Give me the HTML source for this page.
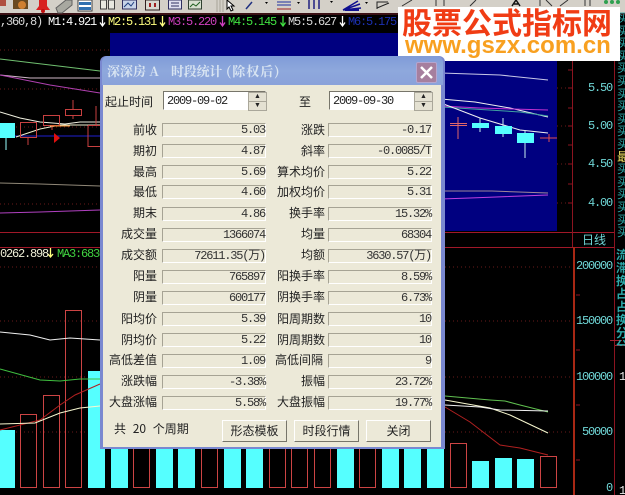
<!DOCTYPE html>
<html><head><meta charset="utf-8"><style>
html,body{margin:0;padding:0;background:#000;width:625px;height:495px;overflow:hidden}
#p{position:relative;width:625px;height:495px;overflow:hidden;background:#000;font-family:"Liberation Sans","Noto Sans CJK SC",sans-serif}
svg{position:absolute;left:0;top:0}
.m{position:absolute;font:12px/14px "Liberation Mono","Noto Sans CJK SC",monospace;letter-spacing:-1.2px;white-space:pre}
.a{position:absolute;font:12px/14px "Liberation Mono",monospace;letter-spacing:-1.2px;color:#6fd6d6;text-align:right;width:50px}
#d{position:absolute;left:100px;top:56px;width:345px;height:393px;background:#7a88d0;border-radius:6px 6px 0 0}
#t{position:absolute;left:2px;top:0;width:341px;height:29px;background:linear-gradient(#7f9bd8,#8ea8dc 50%,#8aa2da);border-radius:6px 6px 0 0}
#t b{position:absolute;top:7px;font:bold 13px/16px "Noto Serif CJK SC","Noto Sans CJK SC",serif;color:#d8e4f2;white-space:pre}
#x{position:absolute;left:314px;top:6px;width:19px;height:19px;background:#a67f9e;border:1px solid #b5a5cf;border-radius:2px}
#b{position:absolute;left:3px;top:29px;width:338px;height:362px;background:#ece9d8}
.l,.f,.i,.s,.g,.o{position:absolute}
.l{font:12px/14px "Noto Sans CJK SC",sans-serif;color:#222;text-align:right;width:60px;white-space:nowrap}
.f{width:102px;height:12px;background:#ece9d8;border:1px solid;border-color:#a6a394 #fff #fff #a6a394;font:12px/13px "Liberation Mono","Noto Sans CJK SC",monospace;letter-spacing:-1.2px;color:#333;text-align:right;white-space:pre}
.i{top:91px;width:101px;height:17px;background:#fff;border:1px solid;border-color:#77756a #fff #fff #77756a;font:12px/18px "Liberation Mono",monospace;letter-spacing:-1.2px;color:#222;text-indent:3px}
.s{width:17px;height:8px;background:#e4e1d2;border:1px solid #aaa79a;font:7px/8px "Liberation Sans",sans-serif;text-align:center;color:#222;box-sizing:content-box}
.o{top:420px;width:63px;height:20px;background:#ece9d8;border:1px solid;border-color:#fff #77756a #77756a #fff;font:12px/20px "Noto Sans CJK SC",sans-serif;color:#222;text-align:center}
</style></head><body><div id="p">
<svg width="625" height="495" viewBox="0 0 625 495" fill="none">
<rect x="0" y="0" width="625" height="13" fill="#d4d0c8"/>
<rect x="0" y="13" width="625" height="2" fill="#3a1014"/>
<rect x="110" y="33" width="447" height="198" fill="#000080"/>
<!-- toolbar icons -->
<rect x="0" y="0" width="6" height="6" fill="#b05040"/>
<rect x="13" y="0" width="15" height="9" fill="#6a4a20"/><circle cx="22" cy="5" r="4" fill="#d08030"/>
<path d="M36 10h14l-3-4V0h-8v6z" fill="#d82020"/><circle cx="43" cy="11" r="2" fill="#c01010"/>
<path d="M56 8L66 0h6v5L62 13h-4z" fill="#a8a8a0" stroke="#606060"/>
<rect x="78" y="0" width="14" height="11" fill="#fff" stroke="#404040"/><rect x="79" y="2" width="12" height="3" fill="#3070b0"/><rect x="79" y="7" width="12" height="3" fill="#3070b0"/>
<rect x="100.500" y="0" width="6" height="9" fill="#e8e8e0" stroke="#404040"/><rect x="108.500" y="0" width="6" height="9" fill="#e8e8e0" stroke="#404040"/>
<rect x="122.500" y="0" width="14" height="9" fill="#c8d4e8" stroke="#303060"/><path d="M124 7l4-4 3 3 3-4" stroke="#204080"/>
<rect x="145.500" y="0" width="14" height="10" fill="#d8d8d0" stroke="#302020"/><path d="M149 3h2v4h-2zM154 3h2v4h-2z" fill="#a02020"/>
<rect x="168.500" y="0" width="13" height="9" fill="#e0e0f0" stroke="#303060"/><path d="M171 3h8M171 6h8" stroke="#303060"/>
<rect x="188.500" y="0" width="13" height="9" fill="#d8e0d0" stroke="#304030"/><path d="M190 7l3-3 3 2 4-4" stroke="#206020"/>
<path d="M217 0v12M220 0v12M223 0v12" stroke="#a8a498"/>
<path d="M227 0v9l2-2 2 4 2-1-2-4h3z" fill="#fff" stroke="#000"/>
<path d="M246 9l6-7" stroke="#203080" stroke-width="1.500"/><path d="M265 2h3l-1.500 2z" fill="#000"/>
<path d="M277 2h14M277 5h14" stroke="#2030a0"/><path d="M277 9h14" stroke="#a02020"/><path d="M297 2h3l-1.500 2z" fill="#000"/>
<path d="M309 0v9M314 0v9M319 0v9" stroke="#202080" stroke-width="1.500"/><path d="M330 1h3l-1.500 2z" fill="#000"/>
<path d="M343 10L358 1M343 10L360 4M343 10L361 8" stroke="#101090" stroke-width="1.500"/><path d="M345 10h14" stroke="#101090" stroke-width="2"/><path d="M365 2h3l-1.500 2z" fill="#000"/>
<path d="M377 9V2h11M377 8l12-5" stroke="#222"/>
<path d="M402 6L412 0M436 0V6M444 0V6M476 0L470 6" stroke="#333"/>
<path d="M512 6L516 0L520 6M514 4H518" stroke="#111" stroke-width="1.500"/>
<path d="M540 0V6M546 0L552 6M560 6L568 0M585 0V6M590 0V6" stroke="#333"/>
<circle cx="606" cy="2" r="2" fill="#30a050"/><circle cx="612" cy="2" r="2" fill="#30a050"/><circle cx="618" cy="2" r="2" fill="#30a050"/>
<!-- dotted grid -->
<g stroke="#6a1a1a" stroke-dasharray="1 3">
<path d="M0 50H110M0 89H100M0 127H100M0 204H100M0 267H100M0 321H100M0 377H100M0 432H100"/>
<path d="M445 267H572M445 321H572M445 377H572M445 432H572"/>
<path d="M557 88H572M557 126H572M557 164H572M557 203H572"/>
</g>
<!-- header arrows -->
<g stroke-width="1.300">
<path d="M102.500 16V26M100 22.500L102.500 26L105 22.500" stroke="#fff"/>
<path d="M162.500 16V26M160 22.500L162.500 26L165 22.500" stroke="#ffff80"/>
<path d="M222.500 16V26M220 22.500L222.500 26L225 22.500" stroke="#d040c0"/>
<path d="M283 16V26M280.500 22.500L283 26L285.500 22.500" stroke="#40e040"/>
<path d="M342.500 16V26M340 22.500L342.500 26L345 22.500" stroke="#fff"/>
<path d="M50.500 248V257M48 254L50.500 257L53 254" stroke="#ffff80"/>
</g>
<!-- upper chart left -->
<path d="M0 59L50 65L100 71" stroke="#70c070"/>
<path d="M0 75L30 78H100" stroke="#d0b8c8"/>
<path d="M0 75L50 85L100 93" stroke="#b040b0"/>
<path d="M0 136H100" stroke="#2020d0"/>
<path d="M0 112L20 118L40 122L65 124L80 122H100" stroke="#f0f0e0"/>
<path d="M16 137L40 129L60 125H100" stroke="#f0f0d0"/>
<path d="M6 138V150" stroke="#9ff"/>
<rect x="0" y="123" width="15" height="15" fill="#55ffff"/>
<g stroke="#c84040">
<rect x="20.500" y="122.500" width="16" height="15"/><path d="M28 138V145"/>
<rect x="43.500" y="115.500" width="16" height="10"/><path d="M52 126V130"/>
<rect x="65.500" y="109.500" width="16" height="6"/><path d="M73 100V109M73 116V119"/>
<path d="M88 125.500H100M88 125.500V146.500H100M96 106V125"/>
</g>
<path d="M54 133L60 138L54 143z" fill="#e01010"/>
<path d="M50 126H70" stroke="#f09030"/>
<path d="M0 183L40 184L100 186" stroke="#908878"/>
<path d="M0 213L40 212L100 210" stroke="#b040c0"/>
<!-- upper chart right -->
<path d="M441 73L500 75L548 80" stroke="#c8c8e8"/>
<path d="M441 99L475 102L510 108L548 117" stroke="#f0f0f0"/>
<path d="M441 106L480 108L548 110" stroke="#c030d0"/>
<path d="M441 107L520 112L548 116" stroke="#40a0a0"/>
<path d="M441 103L480 118L520 130L548 133" stroke="#f0f0f0"/>
<rect x="441" y="118" width="3" height="8" fill="#55ffff"/>
<path d="M458 117V139M450 123.500H467M450 125.500H467" stroke="#e06868"/>
<path d="M480 118V132M503 118V137M525 130V158" stroke="#c8f0f0"/>
<rect x="472" y="123" width="17" height="5" fill="#55ffff"/>
<rect x="495" y="126" width="17" height="8" fill="#55ffff"/>
<rect x="517" y="133" width="17" height="10" fill="#55ffff"/>
<path d="M549 134V142M540 138H557" stroke="#e05050"/>
<path d="M441 191L492 191L548 193" stroke="#a08898"/>
<path d="M441 199L470 198L548 195" stroke="#c040e0"/>
<!-- frame lines -->
<path d="M0 232.500H614M0 247.500H614" stroke="#a01828"/>
<path d="M572.500 15V247M614.500 15V495" stroke="#8c1420"/>
<path d="M574 247V495" stroke="#a82814" stroke-width="2"/>
<path d="M615 345.500H625M610 340.500H622" stroke="#a02030"/>
<path d="M568 50H572M568 70H572M568 88H572M568 108H572M568 126H572M568 145H572M568 164H572M568 184H572M568 203H572M576 295H580M576 350H580M576 405H580M576 460H580" stroke="#8c1420"/>
<!-- volume bars -->
<g fill="#55ffff">
<rect x="0" y="430" width="15" height="58"/><rect x="88" y="371" width="17" height="117"/>
<rect x="111" y="449" width="17" height="39"/><rect x="156" y="449" width="17" height="39"/><rect x="178" y="449" width="17" height="39"/>
<rect x="224" y="449" width="17" height="39"/><rect x="246" y="449" width="17" height="39"/><rect x="337" y="449" width="17" height="39"/>
<rect x="382" y="449" width="17" height="39"/><rect x="404" y="449" width="17" height="39"/><rect x="427" y="438" width="17" height="50"/>
<rect x="472" y="461" width="17" height="27"/><rect x="495" y="458" width="17" height="30"/><rect x="517" y="459" width="17" height="29"/>
</g>
<g stroke="#cc4444">
<rect x="20.500" y="414.500" width="16" height="73"/><rect x="43.500" y="395.500" width="16" height="92"/><rect x="65.500" y="310.500" width="16" height="177"/>
<path d="M133.500 449V487.500H149.500V449M201.500 449V487.500H217.500V449M269.500 449V487.500H285.500V449M291.500 449V487.500H307.500V449M314.500 449V487.500H330.500V449M359.500 449V487.500H375.500V449"/>
<rect x="450.500" y="443.500" width="16" height="44"/><rect x="540.500" y="456.500" width="16" height="31"/>
</g>
<!-- volume lines -->
<path d="M0 332L30 335L50 340L70 338L100 340" stroke="#f0f0f0"/>
<path d="M0 369L40 380L60 381L80 379L100 379" stroke="#40c040"/>
<path d="M0 430L40 420L60 405L75 395L100 384" stroke="#b02020"/>
<path d="M0 424L35 423L60 413L80 408L100 406" stroke="#f8f8d0"/>
<path d="M445 396L490 400L505 401L520 405L540 410L548 412" stroke="#60c050"/>
<path d="M445 400L490 408L510 415L548 433" stroke="#f8f8d0"/>
<path d="M445 405L480 407L500 410L548 411" stroke="#f0f0f0"/>
<path d="M445 407L470 422L500 445L520 448L548 455" stroke="#b02020"/>
</svg>
<!-- header text -->
<span class="m" style="left:0;top:15px;color:#d8d8d8">,360,8)</span>
<span class="m" style="left:48px;top:15px;color:#fff">M1:4.921</span>
<span class="m" style="left:108px;top:15px;color:#ffff80">M2:5.131</span>
<span class="m" style="left:168px;top:15px;color:#d040c0">M3:5.220</span>
<span class="m" style="left:228px;top:15px;color:#40e040">M4:5.145</span>
<span class="m" style="left:288px;top:15px;color:#d8d8d8">M5:5.627</span>
<span class="m" style="left:348px;top:15px;color:#1c30b0">M6:5.175</span>
<span class="m" style="left:0;top:247px;color:#f0f0d8">0262.898</span>
<span class="m" style="left:57px;top:247px;color:#40d040;width:43px;overflow:hidden">MA3:6830</span>
<!-- axis -->
<span class="a" style="left:562px;top:81px">5.50</span>
<span class="a" style="left:562px;top:119px">5.00</span>
<span class="a" style="left:562px;top:157px">4.50</span>
<span class="a" style="left:562px;top:196px">4.00</span>
<span class="a" style="left:562px;top:259px">200000</span>
<span class="a" style="left:562px;top:314px">150000</span>
<span class="a" style="left:562px;top:370px">100000</span>
<span class="a" style="left:562px;top:425px">50000</span>
<span class="a" style="left:562px;top:481px">0</span>
<span class="m" style="left:582px;top:233px;color:#6fd6d6;font-family:'Noto Sans CJK SC',sans-serif;letter-spacing:0">日线</span>
<!-- right column -->
<div style="position:absolute;left:617px;top:12px;width:8px;height:235px;overflow:hidden;font:12px/12.600px 'Noto Sans CJK SC',sans-serif;color:#2ca8a8">买<br>买<br>买<br>买<br>买<br>买<br>买<br>买<br>买<br>买<br>买<br><span style="color:#f0e060">最</span><br>买<br>买<br>买<br>买<br>买<br>买</div>
<div style="position:absolute;left:616px;top:248px;width:9px;height:98px;overflow:hidden;font:bold 12px/13px 'Noto Sans CJK SC',sans-serif;color:#2ca8a8">流<br>滞<br>换<br>占<br>占<br>换<br>分<br>分</div>
<span class="m" style="left:619px;top:370px;color:#e8e8e8">1</span>
<span class="m" style="left:619px;top:484px;color:#e8e8e8">1</span>
<!-- watermark -->
<div style="position:absolute;left:398px;top:7px;width:222px;height:54px;background:#fff"></div>
<div style="position:absolute;left:402px;top:2px;font:bold 30px/38px 'Noto Sans CJK SC',sans-serif;color:#f03c14;white-space:nowrap">股票公式指标网</div>
<div style="position:absolute;left:405px;top:32px;font:bold 24px/28px 'Liberation Sans',sans-serif;color:#f8a020;white-space:nowrap">www.gszx.com.cn</div>
<!-- dialog -->
<div id="d"><div id="t"><b style="left:5px">深深房 A</b><b style="left:69px;letter-spacing:-.2px">时段统计</b><b style="left:124px;letter-spacing:1px">(除权后)</b>
<div id="x"><svg width="19" height="19" viewBox="0 0 19 19"><path d="M4 4L15 15M15 4L4 15" stroke="#fff" stroke-width="2.500"/></svg></div></div>
<div id="b"></div></div>
<div class="l" style="left:93px;top:95px;">起止时间</div>
<div class="i" style="left:163px;">2009-09-02</div>
<div class="s" style="left:248px;top:92px;">▲</div><div class="s" style="left:248px;top:101px;">▼</div>
<div class="l" style="left:251px;top:95px;">至</div>
<div class="i" style="left:329px;">2009-09-30</div>
<div class="s" style="left:414px;top:92px;">▲</div><div class="s" style="left:414px;top:101px;">▼</div>

<div class="l" style="left:97px;top:123px">前收</div><div class="f" style="left:162px;top:123px">5.03</div>
<div class="l" style="left:265px;top:123px">涨跌</div><div class="f" style="left:328px;top:123px">-0.17</div>
<div class="l" style="left:97px;top:144px">期初</div><div class="f" style="left:162px;top:144px">4.87</div>
<div class="l" style="left:265px;top:144px">斜率</div><div class="f" style="left:328px;top:144px">-0.0085/T</div>
<div class="l" style="left:97px;top:165px">最高</div><div class="f" style="left:162px;top:165px">5.69</div>
<div class="l" style="left:265px;top:165px">算术均价</div><div class="f" style="left:328px;top:165px">5.22</div>
<div class="l" style="left:97px;top:185px">最低</div><div class="f" style="left:162px;top:185px">4.60</div>
<div class="l" style="left:265px;top:185px">加权均价</div><div class="f" style="left:328px;top:185px">5.31</div>
<div class="l" style="left:97px;top:206px">期末</div><div class="f" style="left:162px;top:207px">4.86</div>
<div class="l" style="left:265px;top:206px">换手率</div><div class="f" style="left:328px;top:207px">15.32%</div>
<div class="l" style="left:97px;top:227px">成交量</div><div class="f" style="left:162px;top:228px">1366074</div>
<div class="l" style="left:265px;top:227px">均量</div><div class="f" style="left:328px;top:228px">68304</div>
<div class="l" style="left:97px;top:248px">成交额</div><div class="f" style="left:162px;top:249px">72611.35(万)</div>
<div class="l" style="left:265px;top:248px">均额</div><div class="f" style="left:328px;top:249px">3630.57(万)</div>
<div class="l" style="left:97px;top:269px">阳量</div><div class="f" style="left:162px;top:270px">765897</div>
<div class="l" style="left:265px;top:269px">阳换手率</div><div class="f" style="left:328px;top:270px">8.59%</div>
<div class="l" style="left:97px;top:290px">阴量</div><div class="f" style="left:162px;top:291px">600177</div>
<div class="l" style="left:265px;top:290px">阴换手率</div><div class="f" style="left:328px;top:291px">6.73%</div>
<div class="l" style="left:97px;top:312px">阳均价</div><div class="f" style="left:162px;top:312px">5.39</div>
<div class="l" style="left:265px;top:312px">阳周期数</div><div class="f" style="left:328px;top:312px">10</div>
<div class="l" style="left:97px;top:333px">阴均价</div><div class="f" style="left:162px;top:333px">5.22</div>
<div class="l" style="left:265px;top:333px">阴周期数</div><div class="f" style="left:328px;top:333px">10</div>
<div class="l" style="left:97px;top:353px">高低差值</div><div class="f" style="left:162px;top:354px">1.09</div>
<div class="l" style="left:263px;top:353px">高低间隔</div><div class="f" style="left:328px;top:354px">9</div>
<div class="l" style="left:97px;top:374px">涨跌幅</div><div class="f" style="left:162px;top:375px">-3.38%</div>
<div class="l" style="left:265px;top:374px">振幅</div><div class="f" style="left:328px;top:375px">23.72%</div>
<div class="l" style="left:97px;top:395px">大盘涨幅</div><div class="f" style="left:162px;top:396px">5.58%</div>
<div class="l" style="left:265px;top:395px">大盘振幅</div><div class="f" style="left:328px;top:396px">19.77%</div>

<div class="l" style="left:114px;top:422px;width:80px;text-align:left;word-spacing:4px">共 20 个周期</div>
<div class="o" style="left:222px">形态模板</div>
<div class="o" style="left:294px">时段行情</div>
<div class="o" style="left:366px">关闭</div>
</div></body></html>
